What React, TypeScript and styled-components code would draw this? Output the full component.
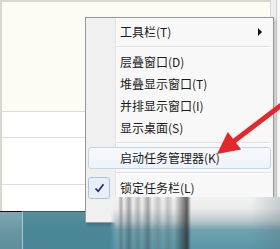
import React from 'react';
import styled, {createGlobalStyle} from 'styled-components';

const GlobalStyle = createGlobalStyle`
  html, body {
    margin: 0;
    padding: 0;
    background: #ffffff;
  }
  body {
    font-family: "Noto Sans CJK SC", "Microsoft YaHei", "Noto Sans", sans-serif;
  }
`

const Page = styled.div`
  position: relative;
  width: 280px;
  height: 249px;
  overflow: hidden;
  display: flex;
  flex-direction: column;
  background: #ffffff;
`
const Desktop = styled.div`
  display: flex;
  flex: 1;
`
const Main = styled.div`
  flex: 1;
  display: flex;
  flex-direction: column;
  border-top: 2px solid #d9d8d0;
  border-left: 2px solid #d9d8d0;
`
const Cream = styled.div`
  height: 109px;
  background: #fdfcf4;
`
const Row = styled.div<{ $h: number }>`
  height: ${p => p.$h}px;
  box-sizing: border-box;
  border-top: 1px solid #dcdcdc;
  background: #ffffff;
`
const RightBand = styled.div`
  width: 10px;
  background: #eeeeee;
  border-left: 1px solid #d6d6d6;
  box-sizing: border-box;
  display: flex;
  justify-content: flex-end;
`
const BandLine = styled.div`
  width: 3px;
  height: 100%;
  border-left: 1px solid #cfcfcf;
  background: #f6f6f6;
`
const Taskbar = styled.div`
  height: 38px;
  display: flex;
  background: linear-gradient(to bottom, #568f9e 0, #4b8797 40%, #4a8696 100%);
  border-top: 1px solid #2f5a66;
  box-sizing: border-box;
`
const StartButton = styled.div`
  width: 23px;
  margin-top: -1px;
  border-top: 1px solid #111;
  border-right: 1px solid #a9c7cf;
  box-sizing: border-box;
  background: linear-gradient(to bottom, #7ea8b3 0, #6997a4 50%, #5f8f9c 100%);
`

const Menu = styled.div`
  position: absolute;
  left: 85px;
  top: 17px;
  width: 189px;
  height: 206px;
  box-sizing: border-box;
  border: 1px solid #979797;
  padding: 3px 0 1px;
  background: linear-gradient(to right, #f0f0f0 0, #f0f0f0 29px, #e2e3e3 29px, #e2e3e3 30px, #ffffff 30px, #ffffff 31px, #f8f8f8 31px);
  box-shadow: 2px 2px 3px rgba(0, 0, 0, 0.18);
  font-size: 12px;
  color: #1b1b1b;
`
const Item = styled.div<{ $active?: boolean }>`
  display: flex;
  align-items: center;
  height: 22px;
  margin: 0 2px;
  box-sizing: border-box;
  border: 1px solid ${p => p.$active ? '#c3d5ea' : 'transparent'};
  border-radius: 3px;
  background: ${p => p.$active ? 'linear-gradient(to bottom, #f7f9fc, #eef3fa)' : 'transparent'};
  white-space: nowrap;
`
const IconCell = styled.div<{ $checked?: boolean }>`
  width: 22px;
  height: 22px;
  margin: -1px 0 -1px -1px;
  box-sizing: border-box;
  display: flex;
  align-items: center;
  justify-content: center;
  border: 1px solid ${p => p.$checked ? '#a9c4e2' : 'transparent'};
  border-radius: 3px;
  background: ${p => p.$checked ? '#e9eff7' : 'transparent'};
`
const Label = styled.span`
  margin-left: 10px;
  line-height: 20px;
`
const SubArrow = styled.span`
  margin-left: auto;
  margin-right: 8px;
  width: 0;
  height: 0;
  border-left: 4px solid #111;
  border-top: 4px solid transparent;
  border-bottom: 4px solid transparent;
`
const Separator = styled.div`
  height: 8px;
  display: flex;
  flex-direction: column;
  justify-content: center;
  margin: 0 2px 0 30px;
`
const SepLine = styled.div`
  height: 1px;
  background: #e0e0e0;
  border-bottom: 1px solid #ffffff;
`

const Blur = styled.div`
  position: absolute;
  left: 110px;
  top: 197px;
  width: 170px;
  height: 52px;
  background:
    linear-gradient(to right, rgba(255,255,255,0) 0, rgba(120,120,120,0) 8px, rgba(90,90,90,0.45) 11px, rgba(120,120,120,0) 14px,
      rgba(70,70,70,0.45) 19px, rgba(120,120,120,0) 23px, rgba(90,90,90,0.35) 28px, rgba(120,120,120,0) 32px,
      rgba(70,70,70,0.45) 38px, rgba(120,120,120,0) 42px, rgba(100,100,100,0.3) 48px, rgba(120,120,120,0) 53px,
      rgba(90,90,90,0.3) 58px, rgba(120,120,120,0) 64px, rgba(30,30,30,0.7) 77px, rgba(120,120,120,0) 81px,
      rgba(120,120,120,0) 140px, rgba(80,100,110,0.25) 170px),
    linear-gradient(to bottom, #f3f3f3 0, #eaebeb 12px, #bcc9cc 24px, #6fa1af 33px, #5b97a7 100%);
  mask-image: linear-gradient(to right, transparent 0, #000 6px);
`

const Arrow = styled.svg`
  position: absolute;
  left: 0;
  top: 0;
`

const CheckMark = () => (
    <svg width="11" height="10" viewBox="0 0 11 10">
        <path d="M1.5 5.5 L4.2 8.3 L9.5 1.2" fill="none" stroke="#1c2a6c" strokeWidth="1.7"/>
    </svg>
)

type EntryType = {
    text: string
    sub?: boolean
    active?: boolean
    checked?: boolean
}

const groups: EntryType[][] = [
    [{text: '工具栏(T)', sub: true}],
    [
        {text: '层叠窗口(D)'},
        {text: '堆叠显示窗口(T)'},
        {text: '并排显示窗口(I)'},
        {text: '显示桌面(S)'},
    ],
    [{text: '启动任务管理器(K)', active: true}],
    [{text: '锁定任务栏(L)', checked: true}, {text: '属性(R)'}],
]

const App = () => {
    return (
        <Page>
            <GlobalStyle/>
            <Desktop>
                <Main>
                    <Cream/>
                    <Row $h={26}/>
                    <Row $h={47}/>
                    <Row $h={27}/>
                </Main>
                <RightBand>
                    <BandLine/>
                </RightBand>
            </Desktop>
            <Taskbar>
                <StartButton/>
            </Taskbar>

            <Menu>
                {groups.map((group, gi) => (
                    <React.Fragment key={gi}>
                        {gi > 0 && <Separator><SepLine/></Separator>}
                        {group.map(entry => (
                            <Item key={entry.text} $active={entry.active}>
                                <IconCell $checked={entry.checked}>
                                    {entry.checked && <CheckMark/>}
                                </IconCell>
                                <Label>{entry.text}</Label>
                                {entry.sub && <SubArrow/>}
                            </Item>
                        ))}
                    </React.Fragment>
                ))}
            </Menu>

            <Blur/>

            <Arrow width="280" height="249" viewBox="0 0 280 249">
                <polygon
                    points="217,154 227.8,132 233,138.7 288.5,96.5 291.5,100.5 236,142.7 241.2,149.4"
                    fill="#e3272b"
                />
            </Arrow>
        </Page>
    );
}

export default App;
